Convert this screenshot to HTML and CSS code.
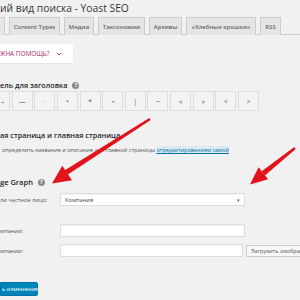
FILE: index.html
```html
<!DOCTYPE html>
<html>
<head>
<meta charset="utf-8">
<link rel="stylesheet" href="styles.css">
</head>
<body>
<div class="page">
  <h1 class="title">ий вид поиска - Yoast SEO</h1>
  <div class="tabs">
    <span class="tab tab-cut"></span>
    <span class="tab t-ct">Content Types</span>
    <span class="tab t-med">Медиа</span>
    <span class="tab t-tax">Таксономии</span>
    <span class="tab t-arc">Архивы</span>
    <span class="tab t-bc">«Хлебные крошки»</span>
    <span class="tab t-rss">RSS</span>
  </div>
  <div class="help"><span>ЖНА ПОМОЩЬ?</span><svg class="chev" width="6" height="4" viewBox="0 0 6 4"><path d="M0.8 0.8 L3 3 L5.2 0.8" fill="none" stroke="#a4286a" stroke-width="0.9"/></svg></div>
  <div class="label-row"><span>ель для заголовка</span><span class="qicon">?</span></div>
  <div class="seps">
    <span class="sep sep-cut">–</span><span class="sep">—</span><span class="sep">·</span><span class="sep">•</span><span class="sep">*</span><span class="sep">⋆</span><span class="sep">|</span><span class="sep">~</span><span class="sep">«</span><span class="sep">»</span><span class="sep">&lt;</span><span class="sep">&gt;</span>
  </div>
  <h2 class="h2 h2-home">ая страница и главная страница</h2>
  <p class="desc">определить название и описание для главной страницы <a class="link">отредактированием самой</a></p>
  <h2 class="h2 h2-kg"><span>ge Graph</span><span class="qicon">?</span></h2>
  <div class="row row1"><span class="lbl">ли частное лицо:</span><span class="select">Компания<span class="caret">▾</span></span></div>
  <div class="row row2"><span class="lbl">мпании:</span><span class="input"></span></div>
  <div class="row row3"><span class="lbl">мпании:</span><span class="input input-short"></span><span class="upload">Загрузить изображение</span></div>
  <div class="save">ь изменения</div>
</div>
<svg class="arrows" width="300" height="300" viewBox="0 0 300 300">
  <polygon points="149.3,118 150.7,120 66,175.7 63.2,171.3" fill="#e3131b"/>
  <polygon points="52,183.5 62.3,165.8 72,180.3" fill="#e3131b"/>
  <polygon points="294.3,147 295.7,149 264.9,175.5 261.7,171.3" fill="#e3131b"/>
  <polygon points="250,184.5 258.5,167.3 268.2,179.3" fill="#e3131b"/>
</svg>
</body>
</html>
```

FILE: styles.css
```css
html, body {
  margin: 0;
  padding: 0;
}
body {
  width: 300px;
  height: 300px;
  overflow: hidden;
  background: #f1f1f1;
  font-family: "Open Sans", "Liberation Sans", sans-serif;
  color: #23282d;
  position: relative;
}
.page {
  display: flex;
  flex-direction: column;
  align-items: flex-start;
}
.title {
  margin: 0;
  padding-top: 1px;
  font-size: 10.3px;
  line-height: 14px;
  font-weight: 400;
  color: #32373c;
}
.tabs {
  margin-top: 2px;
  width: 300px;
  height: 18px;
  display: flex;
  gap: 4px;
  border-bottom: 1px solid #ccc;
  box-sizing: border-box;
}
.tab {
  flex: none;
  box-sizing: border-box;
  height: 18px;
  display: flex;
  align-items: center;
  justify-content: center;
  padding: 0;
  background: #e5e5e5;
  border: 1px solid #ccc;
  border-bottom: none;
  font-size: 6px;
  font-weight: 600;
  color: #666;
  white-space: nowrap;
  overflow: hidden;
}
.tab-cut {
  width: 5px;
  border-left: none;
}
.t-ct { width: 51px; }
.t-med { width: 30px; }
.t-tax { width: 47px; }
.t-arc { width: 33px; }
.t-bc { width: 70px; }
.t-rss { width: 21px; }
.help {
  margin-top: 9px;
  height: 19px;
  width: 73px;
  box-sizing: border-box;
  background: #fff;
  display: flex;
  align-items: center;
  gap: 6px;
  font-size: 6.4px;
  color: #a4286a;
  box-shadow: 0 1px 1px rgba(0,0,0,0.06);
}
.chev {
  display: block;
}
.label-row {
  margin-top: 17px;
  height: 10px;
  display: flex;
  align-items: center;
  gap: 5px;
  font-size: 7.3px;
  font-weight: 600;
  color: #23282d;
}
.qicon {
  width: 7px;
  height: 7px;
  border-radius: 50%;
  background: #888;
  color: #fff;
  font-size: 5.5px;
  font-weight: 700;
  line-height: 7px;
  text-align: center;
}
.seps {
  margin-top: 1px;
  display: flex;
  gap: 1.65px;
}
.sep {
  box-sizing: border-box;
  width: 21px;
  height: 20px;
  border: 1px solid #ddd;
  background: #f3f3f3;
  display: flex;
  align-items: center;
  justify-content: center;
  font-size: 6.5px;
  color: #555;
}
.sep-cut {
  width: 10px;
  border-left: none;
  justify-content: flex-start;
  padding-left: 1px;
}
.h2 {
  margin: 0;
  font-size: 7.3px;
  line-height: 10px;
  font-weight: 600;
  color: #23282d;
}
.h2-home {
  margin-top: 19px;
}
.desc {
  margin: 6px 0 0 2px;
  font-size: 5.5px;
  line-height: 8px;
  color: #555;
  white-space: nowrap;
}
.link {
  color: #0073aa;
  text-decoration: underline;
  background: #dbe9f2;
}
.h2-kg {
  margin-top: 23px;
  display: flex;
  align-items: center;
  gap: 5px;
  font-size: 7.5px;
}
.row {
  display: flex;
  align-items: center;
  font-size: 5.7px;
  color: #555;
}
.row1 { margin-top: 6px; }
.row2 { margin-top: 18px; }
.row3 { margin-top: 7px; }
.lbl {
  width: 60px;
  white-space: nowrap;
}
.select, .input {
  box-sizing: border-box;
  width: 185px;
  height: 13px;
  background: #fff;
  border: 1px solid #ddd;
  box-shadow: inset 0 1px 1px rgba(0,0,0,0.05);
}
.select {
  display: flex;
  align-items: center;
  justify-content: space-between;
  padding: 0 4px;
  font-size: 5.7px;
  color: #444;
}
.caret {
  font-size: 5px;
  color: #666;
}
.input-short {
  width: 183px;
}
.upload {
  margin-left: 3px;
  box-sizing: border-box;
  height: 12px;
  padding: 0 4px;
  display: flex;
  align-items: center;
  background: #f7f7f7;
  border: 1px solid #ccc;
  font-size: 5.7px;
  color: #555;
  white-space: nowrap;
}
.save {
  margin-top: 25px;
  box-sizing: border-box;
  height: 14px;
  width: 38px;
  display: flex;
  align-items: center;
  padding-left: 1px;
  background: #0085ba;
  border: 1px solid #0073aa;
  border-radius: 0 2px 2px 0;
  font-size: 5.7px;
  color: #fff;
  white-space: nowrap;
}
.arrows {
  position: absolute;
  left: 0;
  top: 0;
}
```
